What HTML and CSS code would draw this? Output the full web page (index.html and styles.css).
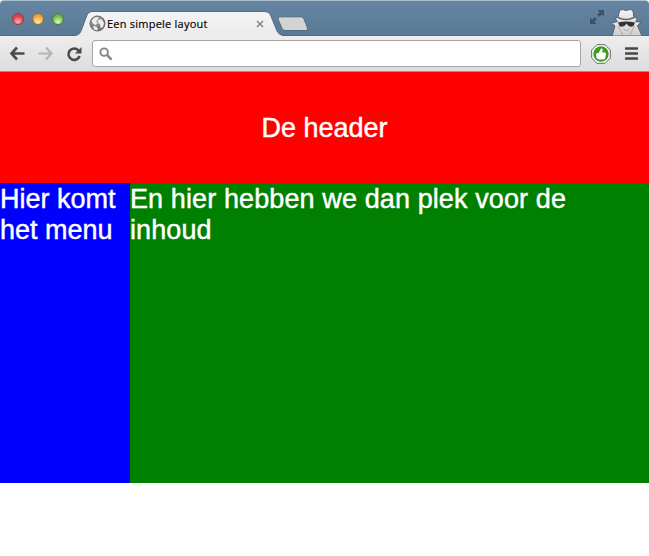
FILE: index.html
```html
<!DOCTYPE html>
<html lang="nl">
<head>
<meta charset="utf-8">
<title>Een simpele layout</title>
<link rel="stylesheet" href="styles.css">
</head>
<body>
<div class="browser">
  <div class="tabstrip">
    <div class="lights"><i class="light red"></i><i class="light yellow"></i><i class="light green"></i></div>
    <div class="tab">
      <svg class="tab-shape" width="209" height="25" viewBox="0 0 209 25"><defs><linearGradient id="tabfill" x2="0" y2="1"><stop stop-color="#f4f4f4"/><stop offset="1" stop-color="#ebebeb"/></linearGradient></defs><path d="M0 24.5C4 24 5 22 6 20L12 4Q13.500 .5 17 .5H190Q194 .5 195.500 4L202 20Q204 24 208 24.500V25H0Z" fill="url(#tabfill)"/><path d="M0 24.500C4 24 5 22 6 20L12 4Q13.500 .5 17 .5H190Q194 .5 195.500 4L202 20Q204 24 208 24.500" fill="none" stroke="#53697d"/></svg>
      <svg class="favicon" width="17" height="17" viewBox="0 0 17 17"><defs><radialGradient id="globe" cx=".4" cy=".3"><stop stop-color="#bbb"/><stop offset="1" stop-color="#777"/></radialGradient></defs><circle cx="8.500" cy="8.500" r="7.500" fill="url(#globe)" stroke="#666"/><path d="M2.500 6l3-3.500 4-.5-1 3-2 1 2 2-2 2-2-1zM9.500 5l3-1 2.500 4-1 4-2.500 1-.5-4-2-1zM4 11l3 .5 2 2-1 2-3-1z" fill="#eee"/></svg>
      <span class="tab-title">Een simpele layout</span>
      <svg class="close" width="8" height="8" viewBox="0 0 8 8"><path d="M1 1l6 6M7 1L1 7" stroke="#858585" stroke-width="1.500"/></svg>
    </div>
    <svg class="newtab" width="32" height="16" viewBox="0 0 32 16"><path d="M3 .8H24Q26 .8 27 3L30.500 12Q31 14.500 29 14.500H8Q6 14.500 5 12.500L1 3Q.5 1 3 .8Z" fill="#d3d3d3" stroke="#53697d"/></svg>
    <svg class="expand" width="16" height="16" viewBox="0 0 16 16"><path d="M8.500 1H15v6.500L12.800 5.300 10.300 7.800 8.200 5.700l2.500-2.500zM1 8.500l2.200 2.200 2.500-2.500 2.100 2.100-2.500 2.500L7.500 15H1z" fill="#3c5165"/></svg>
    <svg class="spy" width="34" height="28" viewBox="0 0 34 28"><defs><linearGradient id="coat" x2="0" y2="1"><stop stop-color="#f2f2f2"/><stop offset="1" stop-color="#cfcfcf"/></linearGradient></defs><path d="M9 9L10.500 3Q12 .5 17 2.500Q22 .5 24 3L25 9Q29 10 28 12L26.500 13.500L32 14L28.500 18L30 21L33 28H3L5 21L6 18L2 15L8.500 13.500L6.500 11Q6.500 9.500 9 9Z" fill="url(#coat)" stroke="#52616f"/><path d="M9 9.500q8 4 16 0" fill="none" stroke="#666" stroke-width="1.500"/><path d="M9 14.500q8-2 17 0l-1.500 3.500q-3 1.500-5.500-.5l-1.500-2-1.500 2q-3 2-5.500.5z" fill="#333"/><path d="M9 18l5 9M25.500 18l-4.500 9M14.500 21l3 2 3-2" fill="none" stroke="#aaa"/></svg>
  </div>
  <div class="toolbar">
    <svg class="back" width="17" height="15" viewBox="0 0 17 15"><path d="M8 1.500L2.500 7.500 8 13.500M3 7.500H15.500" fill="none" stroke="#4b4b4b" stroke-width="2.600"/></svg>
    <svg class="fwd" width="17" height="15" viewBox="0 0 17 15"><path d="M9 1.500l5.500 6L9 13.500M14 7.500H1.500" fill="none" stroke="#b5b5b5" stroke-width="2.200"/></svg>
    <svg class="reload" width="16" height="16" viewBox="0 0 16 16"><path d="M12.500 4.500A5.700 5.700 0 1 0 13.600 10" fill="none" stroke="#4b4b4b" stroke-width="2.600"/><path d="M15.500 1v6.500H9z" fill="#4b4b4b"/></svg>
    <div class="omnibox"><svg width="14" height="14" viewBox="0 0 15 15"><circle cx="5.500" cy="5.500" r="4" fill="none" stroke="#858585" stroke-width="2"/><path d="M8.500 8.500l5 5" stroke="#858585" stroke-width="2.500"/></svg></div>
    <svg class="thumb" width="20" height="20" viewBox="0 0 20 20"><path d="M6 .7h8L19.300 6v8L14 19.300H6L.7 14V6z" fill="#fff" stroke="#666"/><circle cx="10" cy="10" r="7.700" fill="#3f9b22"/><path d="M5 9.500l2.500-.5L10 4.500q2-.5 1.700 1.500l-.5 2.500H14q1.500.5 1 2l-1 4q-.5 1-2 1H8L5.500 14z" fill="#fff"/></svg>
    <svg class="menu-icon" width="13" height="13" viewBox="0 0 13 13"><path d="M1 1.500h11M1 6.500h11M1 11.500h11" stroke="#484848" stroke-width="2.600" stroke-linecap="round"/></svg>
  </div>
</div>
<header class="header">De header</header>
<div class="columns">
  <nav class="menu">Hier komt het menu</nav>
  <main class="content">En hier hebben we dan plek voor de inhoud</main>
</div>
</body>
</html>
```
FILE: styles.css
```css
* { box-sizing: border-box; }
body { margin: 0; background: #fff; color: #fff; font: 27px/31px "Liberation Sans", Arial, sans-serif; -webkit-text-stroke: .45px #fff; }
svg { display: block; flex: none; }
.tabstrip { height: 36px; display: flex; align-items: flex-start; background: linear-gradient(#6485a2, #5b7994); border-top: 1px solid #aabdcc; border-bottom: 1px solid #53697d; border-radius: 4px 4px 0 0; }
.lights { display: flex; gap: 8px; padding: 12px 0 0 12px; width: 75px; }
.light { width: 12px; height: 12px; border-radius: 50%; border: 1px solid #555; }
.red { background: radial-gradient(circle at 50% 80%, #ffb0b0, #e03c48 65%); border-color: #8b3b4b; }
.yellow { background: radial-gradient(circle at 50% 80%, #fff09c, #eea235 65%); border-color: #8e6a43; }
.green { background: radial-gradient(circle at 50% 80%, #dcffac, #6bb54b 65%); border-color: #4e784b; }
.tab { position: relative; width: 202px; height: 25px; margin-top: 10px; display: flex; align-items: center; padding-left: 14px; }
.tab-shape { position: absolute; left: 0; top: 0; }
.favicon, .tab-title, .close { position: relative; }
.tab-title { margin-left: 1px; width: 149px; color: #000; font: 11px/14px "Open Sans", sans-serif; letter-spacing: .23px; -webkit-text-stroke: .15px #000; white-space: nowrap; }
.newtab { margin-top: 15px; }
.expand { margin: 8px 4px 0 auto; }
.spy { margin: 7px 6px 0 0; }
.toolbar { height: 36px; display: flex; align-items: center; padding-left: 9px; background: linear-gradient(#eee, #dcdcdc); border-bottom: 1px solid #949494; }
.fwd { margin-left: 11px; }
.reload { margin-left: 12px; }
.omnibox { width: 489px; height: 27px; margin-left: 10px; padding: 6px; background: #fff; border: 1px solid #a5a5a5; border-radius: 3px; }
.thumb { margin-left: 10px; }
.menu-icon { margin-left: 14px; }
.header { height: 111px; display: flex; align-items: center; justify-content: center; padding-top: 1px; background: #f00; }
.columns { display: flex; height: 300px; }
.menu, .content { padding-top: 1px; }
.menu { width: 130px; background: #00f; }
.content { flex: 1; background: green; letter-spacing: .11px; }
```
